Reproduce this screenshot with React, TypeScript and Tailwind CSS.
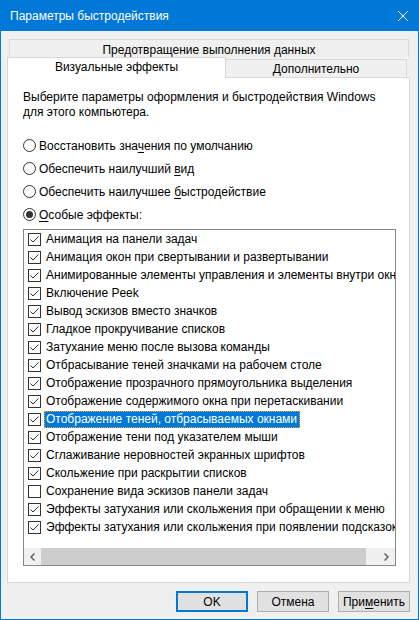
import React from 'react';

const items: { label: string; checked: boolean; selected?: boolean }[] = [
    { label: 'Анимация на панели задач', checked: true },
    { label: 'Анимация окон при свертывании и развертывании', checked: true },
    { label: 'Анимированные элементы управления и элементы внутри окна', checked: true },
    { label: 'Включение Peek', checked: true },
    { label: 'Вывод эскизов вместо значков', checked: true },
    { label: 'Гладкое прокручивание списков', checked: true },
    { label: 'Затухание меню после вызова команды', checked: true },
    { label: 'Отбрасывание теней значками на рабочем столе', checked: true },
    { label: 'Отображение прозрачного прямоугольника выделения', checked: true },
    { label: 'Отображение содержимого окна при перетаскивании', checked: true },
    { label: 'Отображение теней, отбрасываемых окнами', checked: true, selected: true },
    { label: 'Отображение тени под указателем мыши', checked: true },
    { label: 'Сглаживание неровностей экранных шрифтов', checked: true },
    { label: 'Скольжение при раскрытии списков', checked: true },
    { label: 'Сохранение вида эскизов панели задач', checked: false },
    { label: 'Эффекты затухания или скольжения при обращении к меню', checked: true },
    { label: 'Эффекты затухания или скольжения при появлении подсказок', checked: true },
];

function Checkbox({ checked }: { checked: boolean }) {
    return (
        <div className="w-[13px] h-[13px] shrink-0 border border-[#333333] bg-white flex items-center justify-center">
            {checked && (
                <svg width="11" height="11" viewBox="0 0 11 11">
                    <polyline points="1.5,5.5 4,8 9.5,2.5" fill="none" stroke="#333333" strokeWidth="1" />
                </svg>
            )}
        </div>
    );
}

function Radio({ checked }: { checked: boolean }) {
    return (
        <div className="w-[13px] h-[13px] shrink-0 rounded-full border border-[#333333] bg-white flex items-center justify-center">
            {checked && <div className="w-[7px] h-[7px] rounded-full bg-[#333333]" />}
        </div>
    );
}

function RadioRow({ checked, children }: { checked: boolean; children: React.ReactNode }) {
    return (
        <div className="h-[23px] flex items-center">
            <Radio checked={checked} />
            <span className="ml-[3px]">{children}</span>
        </div>
    );
}

export default function App() {
    return (
        <div
            className="w-[419px] h-[620px] border border-[#0078d7] bg-[#f0f0f0] flex flex-col text-[12px] text-black overflow-hidden"
            style={{ fontFamily: '"Liberation Sans", Arial, sans-serif' }}
        >
            {/* Title bar */}
            <div className="h-[30px] shrink-0 bg-[#0078d7] flex items-center justify-between pl-[9px] pr-[9px] text-white">
                <span className="text-[12px]">Параметры быстродействия</span>
                <svg width="10" height="10" viewBox="0 0 10 10" className="mr-[1px]">
                    <path d="M0 0 L10 10 M10 0 L0 10" stroke="white" strokeWidth="1" />
                </svg>
            </div>

            <div className="flex flex-col pl-[6px] pr-[8px] pt-[8px]">
                {/* Tab row 1 */}
                <div className="ml-[2px] mr-[1px] h-[18px] border border-b-0 border-[#d9d9d9] flex items-center justify-center pt-[3px]">
                    Предотвращение выполнения данных
                </div>
                {/* Tab row 2 */}
                <div className="h-[20px] flex items-start">
                    <div className="relative z-10 w-[219px] h-[21px] bg-white border border-b-0 border-[#d9d9d9] flex items-start justify-center">
                        Визуальные эффекты
                    </div>
                    <div className="mt-[2px] w-[181px] h-[18px] border border-l-0 border-b-0 border-[#d9d9d9] flex items-center justify-center">
                        Дополнительно
                    </div>
                </div>

                {/* Panel */}
                <div className="h-[506px] bg-white border border-[#d9d9d9] pl-[15px] pt-[12px]">
                    <p className="leading-[15px]">
                        Выберите параметры оформления и быстродействия Windows
                        <br />
                        для этого компьютера.
                    </p>
                    <div className="mt-[14px] flex flex-col">
                        <RadioRow checked={false}>
                            Восстановить зна<u className="underline-offset-2">ч</u>ения по умолчанию
                        </RadioRow>
                        <RadioRow checked={false}>
                            Обеспечить наилучший <u className="underline-offset-2">в</u>ид
                        </RadioRow>
                        <RadioRow checked={false}>
                            Обеспечить наилучшее <u className="underline-offset-2">б</u>ыстродействие
                        </RadioRow>
                        <RadioRow checked={true}>
                            <u className="underline-offset-2">О</u>собые эффекты:
                        </RadioRow>
                    </div>

                    {/* List box */}
                    <div className="mt-[3px] w-[373px] h-[337px] border border-[#828790] flex flex-col overflow-hidden">
                        <div className="flex-1 overflow-hidden">
                            {items.map((item) => (
                                <div key={item.label} className="h-[18px] flex items-center pl-[4px] whitespace-nowrap">
                                    <Checkbox checked={item.checked} />
                                    <span
                                        className={`ml-[3px] h-[17px] flex items-center pl-[1px] pr-[2px] border ${
                                            item.selected
                                                ? 'bg-[#0078d7] text-white border-dotted border-[#f5a623]'
                                                : 'border-transparent'
                                        }`}
                                    >
                                        {item.label}
                                    </span>
                                </div>
                            ))}
                        </div>
                        {/* Horizontal scrollbar */}
                        <div className="h-[17px] shrink-0 bg-[#f0f0f0] flex">
                            <div className="w-[17px] flex items-center justify-center">
                                <svg width="5" height="8" viewBox="0 0 5 8">
                                    <polyline points="4.5,0.5 1,4 4.5,7.5" fill="none" stroke="#606060" strokeWidth="1.5" />
                                </svg>
                            </div>
                            <div className="w-[325px] bg-[#cdcdcd]" />
                            <div className="flex-1" />
                            <div className="w-[17px] flex items-center justify-center">
                                <svg width="5" height="8" viewBox="0 0 5 8">
                                    <polyline points="0.5,0.5 4,4 0.5,7.5" fill="none" stroke="#606060" strokeWidth="1.5" />
                                </svg>
                            </div>
                        </div>
                    </div>
                </div>

                {/* Buttons */}
                <div className="mt-[8px] flex justify-end gap-[9px]">
                    <button className="w-[72px] h-[21px] bg-[#e1e1e1] border-2 border-[#0078d7] flex items-center justify-center">
                        OK
                    </button>
                    <button className="w-[72px] h-[21px] bg-[#e1e1e1] border border-[#adadad] flex items-center justify-center">
                        Отмена
                    </button>
                    <button className="w-[72px] h-[21px] bg-[#e1e1e1] border border-[#adadad] flex items-center justify-center">
                        При<u className="underline-offset-2">м</u>енить
                    </button>
                </div>
            </div>
        </div>
    );
}
